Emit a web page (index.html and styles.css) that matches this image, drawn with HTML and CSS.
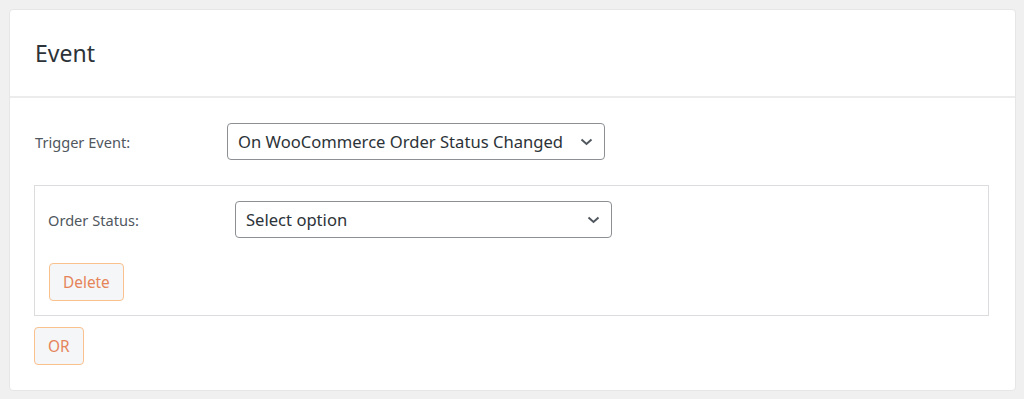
FILE: index.html
```html
<!DOCTYPE html>
<html lang="en">
<head>
    <meta charset="UTF-8">
    <meta name="viewport" content="width=device-width, initial-scale=1.0">
    <title>Event</title>
    <link rel="stylesheet" href="styles.css">
</head>
<body>
    <div class="card">
        <div class="card-header">
            <h2>Event</h2>
        </div>
        <div class="card-body">
            <div class="field-row">
                <label class="field-label">Trigger Event:</label>
                <div class="select select-trigger">
                    <span>On WooCommerce Order Status Changed</span>
                    <svg class="chevron" viewBox="0 0 13 8" width="13" height="8"><path d="M1.5 1.5 L6.5 6 L11.5 1.5" fill="none" stroke="#50575e" stroke-width="2"/></svg>
                </div>
            </div>
            <div class="condition-box">
                <div class="field-row">
                    <label class="field-label inner">Order Status:</label>
                    <div class="select select-status">
                        <span>Select option</span>
                        <svg class="chevron" viewBox="0 0 13 8" width="13" height="8"><path d="M1.5 1.5 L6.5 6 L11.5 1.5" fill="none" stroke="#50575e" stroke-width="2"/></svg>
                    </div>
                </div>
                <button class="btn">Delete</button>
            </div>
            <button class="btn">OR</button>
        </div>
    </div>
</body>
</html>
```

FILE: styles.css
```css
body {
    font-family: "Noto Sans", "Open Sans", sans-serif;
    margin: 0;
    padding: 9px 8px 0 9px;
    background-color: #f0f0f1;
    color: #3c434a;
}

.card {
    background-color: #fff;
    border: 1px solid #e6e6e6;
    border-radius: 4px;
    height: 382px;
    box-sizing: border-box;
}

.card-header {
    height: 86px;
    border-bottom: 2px solid #ececec;
    display: flex;
    align-items: center;
    padding: 0 25px;
}

.card-header h2 {
    margin: 0;
    font-size: 23px;
    font-weight: 400;
    color: #2c3338;
}

.card-body {
    padding: 25px 25px 0 24px;
}

.field-row {
    display: flex;
    align-items: center;
}

.field-label {
    width: 192px;
    font-size: 14.6px;
    color: #50575e;
    padding-left: 1px;
}

.field-label.inner {
    width: 187px;
    padding-left: 0;
}

.select {
    display: flex;
    align-items: center;
    justify-content: space-between;
    height: 37px;
    box-sizing: border-box;
    border: 1px solid #8c8f94;
    border-radius: 4px;
    padding: 0 11px 0 10px;
    font-size: 16.6px;
    color: #2c3338;
}

.select-trigger {
    width: 378px;
}

.select-status {
    width: 377px;
}

.condition-box {
    margin-top: 25px;
    border: 1px solid #dcdcde;
    padding: 15px 13px 14px 13px;
    width: 955px;
    box-sizing: border-box;
}

.condition-box .btn {
    margin-top: 25px;
    margin-left: 1px;
}

.btn {
    display: block;
    height: 38px;
    padding: 0 13px;
    font-family: inherit;
    font-size: 15.4px;
    color: #e5845a;
    background-color: #f5f6f7;
    border: 1px solid #f8c18e;
    border-radius: 4px;
}

.card-body > .btn {
    margin-top: 11px;
}
```
